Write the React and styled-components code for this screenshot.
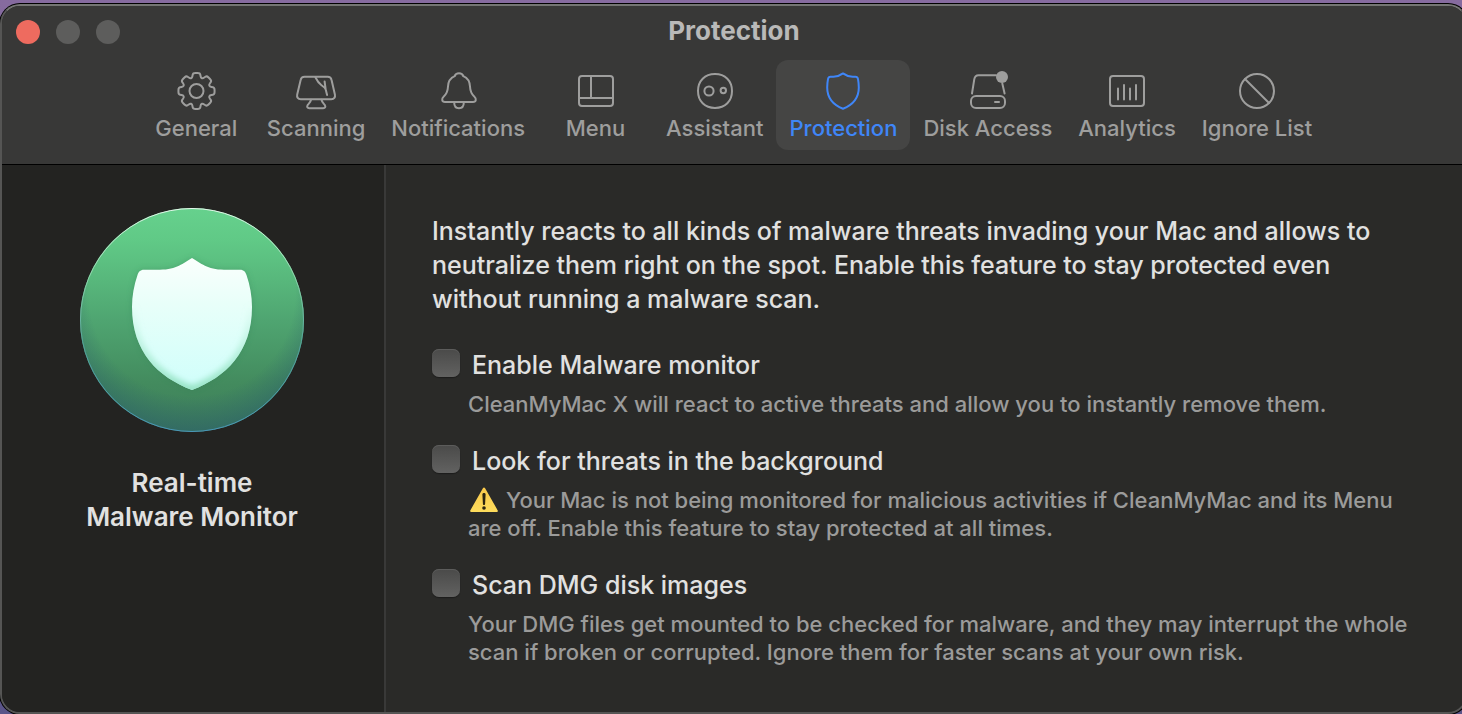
import { useState } from "react";
import styled, { createGlobalStyle } from "styled-components";

const GlobalStyle = createGlobalStyle`
  * {
    box-sizing: border-box;
  }

  body {
    margin: 0;
    overflow: hidden;
    background: linear-gradient(#866b9f, #5a5488);
    font-family: Inter, "Liberation Sans", sans-serif;
    color: #e1e1e0;
  }
`;

const Desktop = styled.div`
  display: flex;
  height: 100vh;
  padding-top: 4px;
`;

const Window = styled.main`
  display: flex;
  flex-direction: column;
  flex: none;
  width: calc(100% + 6px);
  border: 2px solid #555554;
  border-top-color: #747573;
  border-radius: 20px;
  box-shadow: 0 0 0 1px #000;
  background: #2a2a28;
  overflow: hidden;
`;

const Header = styled.header`
  padding-bottom: 14px;
  background: #383837;
  border-bottom: 1px solid #000;
`;

const TitleBar = styled.div`
  display: grid;
  grid-template-columns: 1fr auto 1fr;
  align-items: center;
  height: 52px;
  margin-bottom: 2px;
  padding: 0 14px;
`;

const Lights = styled.div`
  display: flex;
  gap: 16px;
`;

const Light = styled.button`
  width: 24px;
  height: 24px;
  padding: 0;
  border: 0;
  border-radius: 50%;
  background: ${({ $color }) => $color};
`;

const Title = styled.h1`
  margin: 0;
  padding-bottom: 2px;
  font-size: 26px;
  font-weight: 700;
  line-height: 34px;
  color: #b9b9b8;
`;

const Toolbar = styled.nav`
  display: flex;
  justify-content: center;
  padding-right: 4px;
`;

const Tab = styled.button`
  display: flex;
  flex-direction: column;
  align-items: center;
  gap: 3px;
  min-width: 115px;
  padding: 11px 13px 8px;
  border: 0;
  border-radius: 12px;
  background: ${({ $active }) => ($active ? "#454544" : "transparent")};
  color: ${({ $active }) => ($active ? "#3f86f8" : "#9e9e9d")};
  font-family: inherit;
  font-size: 22px;
  font-weight: 500;
  line-height: 28px;
  white-space: nowrap;
`;

const Icon = styled.svg`
  width: 44px;
  height: 40px;
  fill: none;
  stroke: currentColor;
  stroke-width: 2;
  stroke-linecap: round;
  stroke-linejoin: round;
`;

const Body = styled.div`
  display: flex;
  flex: 1;
`;

const Sidebar = styled.aside`
  display: flex;
  flex-direction: column;
  align-items: center;
  flex: none;
  width: 384px;
  padding: 43px 2px 0 0;
  background: #232321;
  border-right: 2px solid #393938;
`;

const Badge = styled.svg`
  width: 224px;
  height: 224px;
`;

const SidebarTitle = styled.h2`
  margin: 34px 0 0;
  font-size: 26px;
  font-weight: 600;
  line-height: 34px;
  text-align: center;
`;

const Content = styled.section`
  flex: 1;
  padding: 49px 40px 0 46px;
  white-space: nowrap;
`;

const Intro = styled.p`
  margin: 0 0 32px;
  font-size: 25px;
  font-weight: 500;
  line-height: 34px;
`;

const Option = styled.div`
  margin-bottom: 26px;
`;

const OptionLabel = styled.label`
  display: flex;
  gap: 12px;
  font-size: 25px;
  font-weight: 500;
  line-height: 34px;
`;

const Checkbox = styled.input`
  appearance: none;
  width: 28px;
  height: 28px;
  margin: 1px 0 0;
  border-radius: 7px;
  background: linear-gradient(#4a4a49, #626261);
  box-shadow: inset 0 1px 0 #5c5c5b, 0 1px 1px #1c1c1b;

  &:checked {
    background: #3f86f8;
  }
`;

const Hint = styled.p`
  margin: 8px 0 0;
  padding-left: 36px;
  font-size: 22px;
  font-weight: 450;
  line-height: 28px;
  color: #9b9b9a;
`;

const WarningIcon = styled.svg`
  width: 32px;
  height: 28px;
  margin-right: 6px;
  vertical-align: top;
`;

// Rounded gear outline, eight teeth around (cx, cy)
const gearPath = (cx, cy) => {
  const points = [];
  for (let i = 0; i < 8; i += 1) {
    [[-18, 14], [-11, 18.4], [11, 18.4], [18, 14]].forEach(([offset, radius]) => {
      const angle = ((i * 45 + offset) * Math.PI) / 180;
      points.push([cx + radius * Math.sin(angle), cy - radius * Math.cos(angle)]);
    });
  }
  const mix = (a, b, t) => `${a[0] + (b[0] - a[0]) * t} ${a[1] + (b[1] - a[1]) * t}`;
  const corners = points.map((point, i) => {
    const prev = points[(i + points.length - 1) % points.length];
    const next = points[(i + 1) % points.length];
    return `${i ? "L" : "M"}${mix(point, prev, 0.35)}Q${point[0]} ${point[1]} ${mix(point, next, 0.35)}`;
  });
  return `${corners.join("")}Z`;
};

const tabs = [
  {
    name: "General",
    icon: (
      <>
        <path d={gearPath(22.5, 20)} />
        <circle cx="22.5" cy="20" r="7" />
      </>
    ),
  },
  {
    name: "Scanning",
    icon: (
      <>
        <path d="M10.5 5.8h23.2c2.2 0 3.4 1 3.8 3l3.4 14.6c.6 2.9-.8 4.9-3.6 4.9H6.8c-2.8 0-4.2-2-3.6-4.9L6.7 8.8c.4-2 1.6-3 3.8-3Z" />
        <path d="M21.5 6.5c1.500 3 3.500 6 6 7.800 2 1.400 3.700 2.200 4.200 4.200l1.400 5.500M30.600 10.500l1 7.500" />
        <path d="M17 28.8c-.5 2.7-2 3.6-3.3 5.2-1.2 1.7-.3 3.2 1.6 3.2h13.9c1.9 0 2.8-1.5 1.6-3.2-1.3-1.6-2.8-2.5-3.3-5.2" />
      </>
    ),
  },
  {
    name: "Notifications",
    icon: (
      <>
        <path d="M23 2.200c-2.300 0-3.800 1.200-4.300 3-4.400 1.900-6.500 5.700-6.700 10.300-.2 4.500-.7 6.800-4.200 9.900-2.600 2.500-2 5.600 1.200 5.600h28c3.200 0 3.800-3.100 1.200-5.600-3.500-3.100-4-5.400-4.200-9.900-.2-4.600-2.300-8.400-6.700-10.300-.5-1.800-2-3-4.300-3Z" />
        <path d="M18.2 31.500c0 3.500 2 5.700 4.800 5.700s4.800-2.200 4.800-5.700" />
      </>
    ),
  },
  {
    name: "Menu",
    icon: (
      <>
        <rect x="5" y="5" width="34" height="30" rx="3" />
        <path d="M5 27h34M17 5v22" />
      </>
    ),
  },
  {
    name: "Assistant",
    icon: (
      <>
        <path d="M22 3c10.200 0 17 6.800 17 17s-6.800 17-17 17S5 30.200 5 20 11.800 3 22 3Z" />
        <circle cx="16" cy="20" r="4.6" />
        <circle cx="30.3" cy="19.5" r="2.7" />
      </>
    ),
  },
  {
    name: "Protection",
    icon: (
      <path d="M22 2.400c-3.300 2.400-5.600 3.400-9.600 3.400H9.600c-1.700 0-2.300.8-2.600 2.300-.5 2.600-.8 5.200-.8 8.400 0 10.500 6.300 17.500 15.800 21.300 9.500-3.800 15.800-10.800 15.800-21.300 0-3.200-.3-5.800-.8-8.400-.3-1.500-.9-2.300-2.600-2.300h-2.800c-4 0-6.300-1-9.600-3.400Z" />
    ),
  },
  {
    name: "Disk Access",
    icon: (
      <>
        <path d="M6 22.5 8.3 8.2C8.8 5.4 10 4.300 12.5 4.300H30M36.300 12.500l2.300 10" />
        <rect x="5" y="25" width="34" height="12" rx="5" />
        <path d="M29 31h4" />
        <circle cx="36" cy="6" r="6" fill="currentColor" stroke="none" />
      </>
    ),
  },
  {
    name: "Analytics",
    icon: (
      <>
        <rect x="5" y="5" width="34" height="30" rx="3" />
        <path d="M13 17.500v11M19 14v14.500M25 17.500v11M31 14v14.500" />
      </>
    ),
  },
  {
    name: "Ignore List",
    icon: (
      <>
        <circle cx="22" cy="20" r="17" />
        <path d="m10 8 24 24" />
      </>
    ),
  },
];

const shield =
  "M112 50C103 55 97 61.7 80 61.7H64C60 61.7 58.5 64 57.5 67C54 77 52 88 52 99C52 144 78 169 112 182C146 169 172 144 172 99C172 88 170 77 166.5 67C165.5 64 164 61.7 160 61.7H144C127 61.7 121 55 112 50Z";

const ShieldBadge = () => (
  <Badge viewBox="0 0 224 224" aria-hidden="true">
    <defs>
      <linearGradient id="disc" x1="0" y1="0" x2="0" y2="1">
        <stop offset="0" stopColor="#66d18d" />
        <stop offset="0.15" stopColor="#60c986" />
        <stop offset="0.5" stopColor="#4fa571" />
        <stop offset="0.78" stopColor="#438b5e" />
        <stop offset="1" stopColor="#3d7c5a" />
      </linearGradient>
      <radialGradient id="shade" cx="0.5" cy="0.38" r="0.64">
        <stop offset="0.72" stopColor="#2b5f6b" stopOpacity="0" />
        <stop offset="1" stopColor="#2b5f6b" stopOpacity="0.65" />
      </radialGradient>
      <linearGradient id="rim" x1="0" y1="0" x2="0" y2="1">
        <stop offset="0" stopColor="#e6f7ec" />
        <stop offset="0.3" stopColor="#8fd5ad" />
        <stop offset="0.6" stopColor="#55a39a" />
        <stop offset="1" stopColor="#4a97b8" />
      </linearGradient>
      <linearGradient id="plate" x1="0" y1="0" x2="0" y2="1">
        <stop offset="0" stopColor="#fbfffd" />
        <stop offset="0.35" stopColor="#e8fff9" />
        <stop offset="1" stopColor="#cffefb" />
      </linearGradient>
      <linearGradient id="edge" x1="0" y1="0" x2="0" y2="1">
        <stop offset="0.35" stopColor="#9ce6c4" stopOpacity="0" />
        <stop offset="1" stopColor="#8fe0bd" />
      </linearGradient>
      <filter id="soft">
        <feGaussianBlur stdDeviation="3" />
      </filter>
      <clipPath id="shieldClip">
        <path d={shield} />
      </clipPath>
    </defs>
    <circle cx="112" cy="112" r="112" fill="url(#disc)" />
    <circle cx="112" cy="112" r="112" fill="url(#shade)" />
    <circle cx="112" cy="112" r="111.5" fill="none" stroke="url(#rim)" />
    <path d={shield} fill="#2f7a52" opacity="0.35" filter="url(#soft)" />
    <path d={shield} fill="url(#plate)" />
    <g clipPath="url(#shieldClip)">
      <path d={shield} fill="none" stroke="url(#edge)" strokeWidth="8" filter="url(#soft)" />
    </g>
  </Badge>
);

const Warning = () => (
  <WarningIcon viewBox="0 0 32 28" role="img" aria-label="Warning">
    <defs>
      <linearGradient id="amber" x1="0" y1="0" x2="0" y2="1">
        <stop offset="0" stopColor="#fbc94a" />
        <stop offset="1" stopColor="#fddc5c" />
      </linearGradient>
    </defs>
    <path d="M14.900 2.200c.5-.9 1.700-.9 2.200 0l12.600 22.200c.5.900 0 1.600-.9 1.600H3.200c-.9 0-1.400-.7-.9-1.600Z" fill="url(#amber)" />
    <path d="M14.400 8.500c0-1 .6-1.500 1.600-1.500s1.600.5 1.600 1.500l-.5 9.300c0 .8-.4 1.200-1.100 1.200s-1.100-.4-1.100-1.200Z" fill="#2c2410" />
    <circle cx="16" cy="22" r="1.8" fill="#2c2410" />
  </WarningIcon>
);

const options = [
  {
    id: "monitor",
    label: "Enable Malware monitor",
    hint: "CleanMyMac X will react to active threats and allow you to instantly remove them.",
  },
  {
    id: "background",
    label: "Look for threats in the background",
    hint: (
      <>
        <Warning />
        Your Mac is not being monitored for malicious activities if CleanMyMac and its Menu
        <br />
        are off. Enable this feature to stay protected at all times.
      </>
    ),
  },
  {
    id: "dmg",
    label: "Scan DMG disk images",
    hint: (
      <>
        Your DMG files get mounted to be checked for malware, and they may interrupt the whole
        <br />
        scan if broken or corrupted. Ignore them for faster scans at your own risk.
      </>
    ),
  },
];

const App = () => {
  const [active, setActive] = useState("Protection");

  return (
    <>
      <GlobalStyle />
      <Desktop>
        <Window>
          <Header>
            <TitleBar>
              <Lights>
                <Light $color="#ee6b5f" aria-label="Close" />
                <Light $color="#5d5d5c" aria-label="Minimize" />
                <Light $color="#5d5d5c" aria-label="Zoom" />
              </Lights>
              <Title>Protection</Title>
            </TitleBar>
            <Toolbar>
              {tabs.map(({ name, icon }) => (
                <Tab key={name} $active={name === active} onClick={() => setActive(name)}>
                  <Icon viewBox="0 0 44 40" aria-hidden="true">
                    {icon}
                  </Icon>
                  {name}
                </Tab>
              ))}
            </Toolbar>
          </Header>
          <Body>
            <Sidebar>
              <ShieldBadge />
              <SidebarTitle>
                Real-time
                <br />
                Malware Monitor
              </SidebarTitle>
            </Sidebar>
            <Content>
              <Intro>
                Instantly reacts to all kinds of malware threats invading your Mac and allows to
                <br />
                neutralize them right on the spot. Enable this feature to stay protected even
                <br />
                without running a malware scan.
              </Intro>
              {options.map(({ id, label, hint }) => (
                <Option key={id}>
                  <OptionLabel htmlFor={id}>
                    <Checkbox type="checkbox" id={id} />
                    {label}
                  </OptionLabel>
                  <Hint>{hint}</Hint>
                </Option>
              ))}
            </Content>
          </Body>
        </Window>
      </Desktop>
    </>
  );
};

export default App;
